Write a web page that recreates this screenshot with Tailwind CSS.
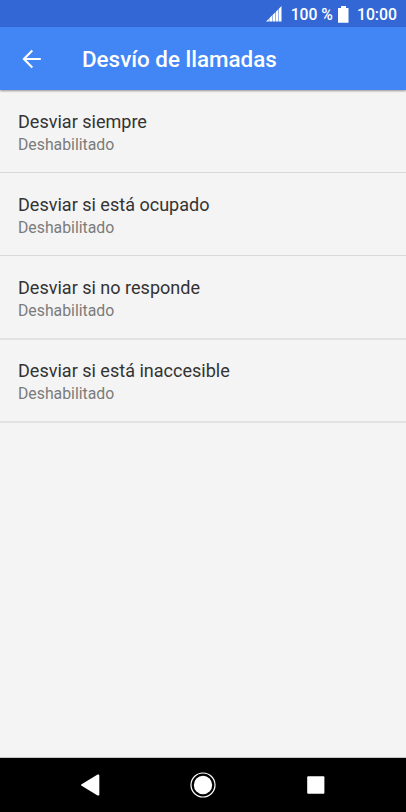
<!DOCTYPE html>
<html lang="es">
<head>
<meta charset="utf-8">
<meta name="viewport" content="width=device-width, initial-scale=1">
<title>Desvío de llamadas</title>
<script src="https://cdn.jsdelivr.net/npm/@tailwindcss/browser@4"></script>
</head>
<body class="flex h-[812px] w-[406px] flex-col overflow-hidden bg-[#f4f4f4] font-['Roboto',sans-serif]">
  <div class="flex h-[27px] shrink-0 items-center justify-end bg-[#3367d6] pt-px pr-[9px] leading-none font-medium text-white">
    <svg class="mr-[9px] h-[16px] w-[16px]" viewBox="0 0 16 16" fill="#fff"><path d="M0 15.5 2.8 12.7v2.8zM3.3 12.3 6 9.6v5.9H3.3zM6.5 9.1l2.7-2.7v9.1H6.5zM9.7 5.9l2.6-2.6v12.2H9.7zM12.8 2.8 15.5.1v15.4h-2.7z"/></svg>
    <span class="pt-px text-[15.7px] whitespace-nowrap">100 %</span>
    <svg class="mr-[8px] ml-[5px] h-[17px] w-[11px]" viewBox="0 0 11 17" fill="#fff"><path d="M3 0h5v2h2.5v14.7H0V2h3z"/></svg>
    <span class="pt-px text-[15.8px]">10:00</span>
  </div>
  <header class="z-10 flex h-[63px] shrink-0 items-center bg-[#4285f4] pt-px text-white shadow-[0_1px_2px_rgba(0,0,0,0.4)]">
    <svg class="ml-[22px] h-[20px] w-[20px]" viewBox="0 0 20 20" fill="none" stroke="#fff" stroke-width="2.1"><path d="M18.8 10H2.2M10.3 1.6 1.9 10l8.4 8.4"/></svg>
    <h1 class="ml-[40px] pt-px text-[22.4px] leading-none font-medium whitespace-nowrap">Desvío de llamadas</h1>
  </header>
  <main class="flex-1">
    <div class="h-[83px] border-b border-[#d9d9d9] px-[18px] pt-[20px]"><h2 class="text-[18.05px] leading-6 text-[#333]">Desviar siempre</h2><p class="text-[15.8px] leading-[22px] text-[#7b7b7b]">Deshabilitado</p></div>
    <div class="h-[83px] border-b border-[#d9d9d9] px-[18px] pt-[20px]"><h2 class="text-[18.05px] leading-6 text-[#333]">Desviar si está ocupado</h2><p class="text-[15.8px] leading-[22px] text-[#7b7b7b]">Deshabilitado</p></div>
    <div class="h-[84px] border-b-2 border-[#e2e2e2] px-[18px] pt-[20px]"><h2 class="text-[18.05px] leading-6 text-[#333]">Desviar si no responde</h2><p class="text-[15.8px] leading-[22px] text-[#7b7b7b]">Deshabilitado</p></div>
    <div class="h-[83px] border-b-2 border-[#e2e2e2] px-[18px] pt-[19px]"><h2 class="text-[18.05px] leading-6 text-[#333]">Desviar si está inaccesible</h2><p class="text-[15.8px] leading-[22px] text-[#7b7b7b]">Deshabilitado</p></div>
  </main>
  <nav class="flex h-[55px] shrink-0 items-center border-t border-[#c4c4c4] bg-black">
    <svg class="ml-[80px] h-[22px] w-[20px]" viewBox="0 0 20 22" fill="#fff"><path d="M1.6 10.2 17.6.6c.9-.5 1.7 0 1.7 1v18.8c0 1-.8 1.5-1.7 1L1.6 11.8c-.8-.5-.8-1.1 0-1.6z"/></svg>
    <svg class="ml-[90px] h-[26px] w-[26px]" viewBox="0 0 26 26" fill="#fff"><circle cx="13" cy="13" r="9.2"/><circle cx="13" cy="13" r="12" fill="none" stroke="#fff" stroke-width="1.2"/></svg>
    <svg class="ml-[91px] h-[18px] w-[18px]" viewBox="0 0 18 18" fill="#fff"><rect x=".2" y=".3" width="17.2" height="17.4" rx="1"/></svg>
  </nav>
</body>
</html>
